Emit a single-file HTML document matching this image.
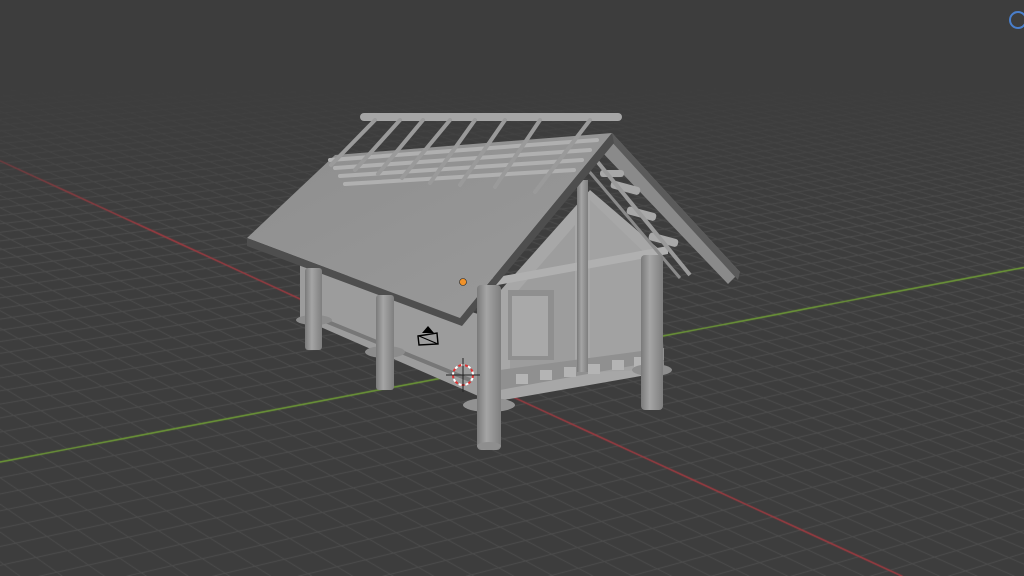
<!DOCTYPE html>
<html><head><meta charset="utf-8"><style>
html,body{margin:0;padding:0;background:#3d3d3d;overflow:hidden}
#wrap{position:relative;width:1024px;height:576px}
canvas,svg{position:absolute;left:0;top:0}
</style></head><body><div id="wrap">
<canvas id="c" width="1024" height="576"></canvas>
<svg width="1024" height="576" viewBox="0 0 1024 576">
<defs>
<linearGradient id="pg" x1="0" x2="1"><stop offset="0" stop-color="#7a7a7a"/><stop offset=".4" stop-color="#a5a5a5"/><stop offset="1" stop-color="#7e7e7e"/></linearGradient>
<linearGradient id="roof" x1="0" y1="0" x2="1" y2="1"><stop offset="0" stop-color="#8e8e8e"/><stop offset="1" stop-color="#9a9a9a"/></linearGradient>
</defs>
<polygon points="612,133 740,272 728,284 600,150" fill="#8a8a8a"/>
<polygon points="612,133 740,272 738,280 610,140" fill="#5a5a5a"/>
<polygon points="300,262 492,318 492,402 300,318" fill="#9c9c9c"/>
<line x1="318" y1="318" x2="470" y2="380" stroke="#777" stroke-width="4"/>
<polygon points="492,300 590,190 660,250 664,372 492,402" fill="#a7a7a7"/>
<polygon points="510,300 575,225 575,370 510,385" fill="#9d9d9d"/>
<polygon points="590,200 650,258 650,370 590,372" fill="#a2a2a2"/>
<rect x="508" y="290" width="46" height="70" fill="#8f8f8f"/>
<rect x="512" y="296" width="36" height="60" fill="#a9a9a9"/>
<polygon points="492,278 668,246 668,254 492,286" fill="#b0b0b0"/>
<polygon points="500,370 664,348 664,360 500,390" fill="#909090"/>
<g fill="#b4b4b4">
<rect x="516" y="374" width="12" height="10"/><rect x="540" y="370" width="12" height="10"/><rect x="564" y="367" width="12" height="10"/><rect x="588" y="364" width="12" height="10"/><rect x="612" y="360" width="12" height="10"/><rect x="634" y="357" width="12" height="10"/>
</g>
<rect x="577" y="180" width="11" height="192" fill="url(#pg)"/>
<g fill="#a8a8a8">
<rect x="612" y="180" width="30" height="8" rx="3" transform="rotate(15 612 180)"/>
<rect x="628" y="206" width="30" height="8" rx="3" transform="rotate(15 628 206)"/>
<rect x="650" y="232" width="30" height="8" rx="3" transform="rotate(15 650 232)"/>
<rect x="600" y="170" width="24" height="7" rx="3"/>
</g>
<line x1="596" y1="160" x2="690" y2="275" stroke="#9a9a9a" stroke-width="4"/>
<line x1="588" y1="170" x2="680" y2="278" stroke="#8a8a8a" stroke-width="3"/>
<polygon points="335,155 612,133 460,318 247,238" fill="url(#roof)"/>
<polygon points="247,238 460,318 612,133 614,143 462,326 247,246" fill="#4e4e4e"/>
<rect x="360" y="113" width="262" height="8" rx="4" fill="#a6a6a6"/>
<g stroke="#b0b0b0" stroke-width="4" stroke-linecap="round">
<line x1="330" y1="160" x2="597" y2="140"/>
<line x1="335" y1="168" x2="590" y2="150"/>
<line x1="340" y1="176" x2="582" y2="160"/>
<line x1="345" y1="184" x2="574" y2="170"/>
</g>
<g stroke="#9a9a9a" stroke-width="4" stroke-linecap="round">
<line x1="375" y1="120" x2="331" y2="165"/>
<line x1="400" y1="120" x2="355" y2="170"/>
<line x1="423" y1="120" x2="378" y2="174"/>
<line x1="450" y1="120" x2="402" y2="178"/>
<line x1="475" y1="120" x2="430" y2="183"/>
<line x1="505" y1="120" x2="460" y2="185"/>
<line x1="540" y1="120" x2="495" y2="187"/>
<line x1="590" y1="120" x2="535" y2="192"/>
</g>
<ellipse cx="314" cy="320" rx="18" ry="5" fill="#8c8c8c"/>
<rect x="305" y="268" width="17" height="82" rx="3" fill="url(#pg)"/>
<ellipse cx="385" cy="352" rx="20" ry="6" fill="#8c8c8c"/>
<rect x="376" y="295" width="18" height="95" rx="3" fill="url(#pg)"/>
<ellipse cx="489" cy="405" rx="26" ry="7" fill="#929292"/>
<rect x="477" y="285" width="24" height="165" rx="4" fill="url(#pg)"/>
<ellipse cx="489" cy="446" rx="12" ry="4" fill="#8e8e8e"/>
<ellipse cx="652" cy="370" rx="20" ry="6" fill="#8e8e8e"/>
<rect x="641" y="255" width="22" height="155" rx="4" fill="url(#pg)"/>
<circle cx="463" cy="282" r="3.5" fill="#f0922a" stroke="#222" stroke-width=".6"/>
<polygon points="428,326 422,333 434,333" fill="#000"/>
<polygon points="418,336 437,333 438,344 419,345" fill="none" stroke="#000" stroke-width="1.4"/>
<line x1="419" y1="336" x2="438" y2="344" stroke="#000" stroke-width="1"/>
<circle cx="463" cy="375" r="10" fill="none" stroke="#d33" stroke-width="2" stroke-dasharray="4 3"/>
<circle cx="463" cy="375" r="10" fill="none" stroke="#fff" stroke-width="2" stroke-dasharray="3 4" stroke-dashoffset="4"/>
<line x1="463" y1="358" x2="463" y2="392" stroke="#222" stroke-width="1"/>
<line x1="446" y1="375" x2="480" y2="375" stroke="#222" stroke-width="1"/>
<circle cx="1018" cy="20" r="8" fill="none" stroke="#4a7fcc" stroke-width="2"/>
</svg>
</div>
<script>
var c=document.getElementById('c'),x=c.getContext('2d');
x.fillStyle='#3d3d3d';x.fillRect(0,0,1024,576);
var O=[463,374],VR=[-1500,-530],VG=[3500,-203],a=0.0105,b=0.0072;
function P(u,v){var w=a*u+b*v+1;return [(a*u*VR[0]+b*v*VG[0]+O[0])/w,(a*u*VR[1]+b*v*VG[1]+O[1])/w,w];}
x.lineWidth=1;
function seg(u1,v1,u2,v2){var n=300;x.beginPath();var s=false;for(var i=0;i<=n;i++){var u=u1+(u2-u1)*i/n,v=v1+(v2-v1)*i/n;var p=P(u,v);if(p[2]<0.06){s=false;continue;}if(!s){x.moveTo(p[0],p[1]);s=true;}else x.lineTo(p[0],p[1]);}x.stroke();}
x.strokeStyle='#4f4f4f';
for(var k=-300;k<=300;k++){seg(k,-300,k,300);seg(-300,k,300,k);}
x.lineWidth=1.5;x.strokeStyle='#a23a40';seg(-300,0,300,0);
x.strokeStyle='#71a035';seg(0,-300,0,300);
var g=x.createLinearGradient(0,80,0,230);g.addColorStop(0,'#3d3d3d');g.addColorStop(1,'rgba(61,61,61,0)');
x.fillStyle=g;x.fillRect(0,0,1024,230);
</script>
</body></html>
